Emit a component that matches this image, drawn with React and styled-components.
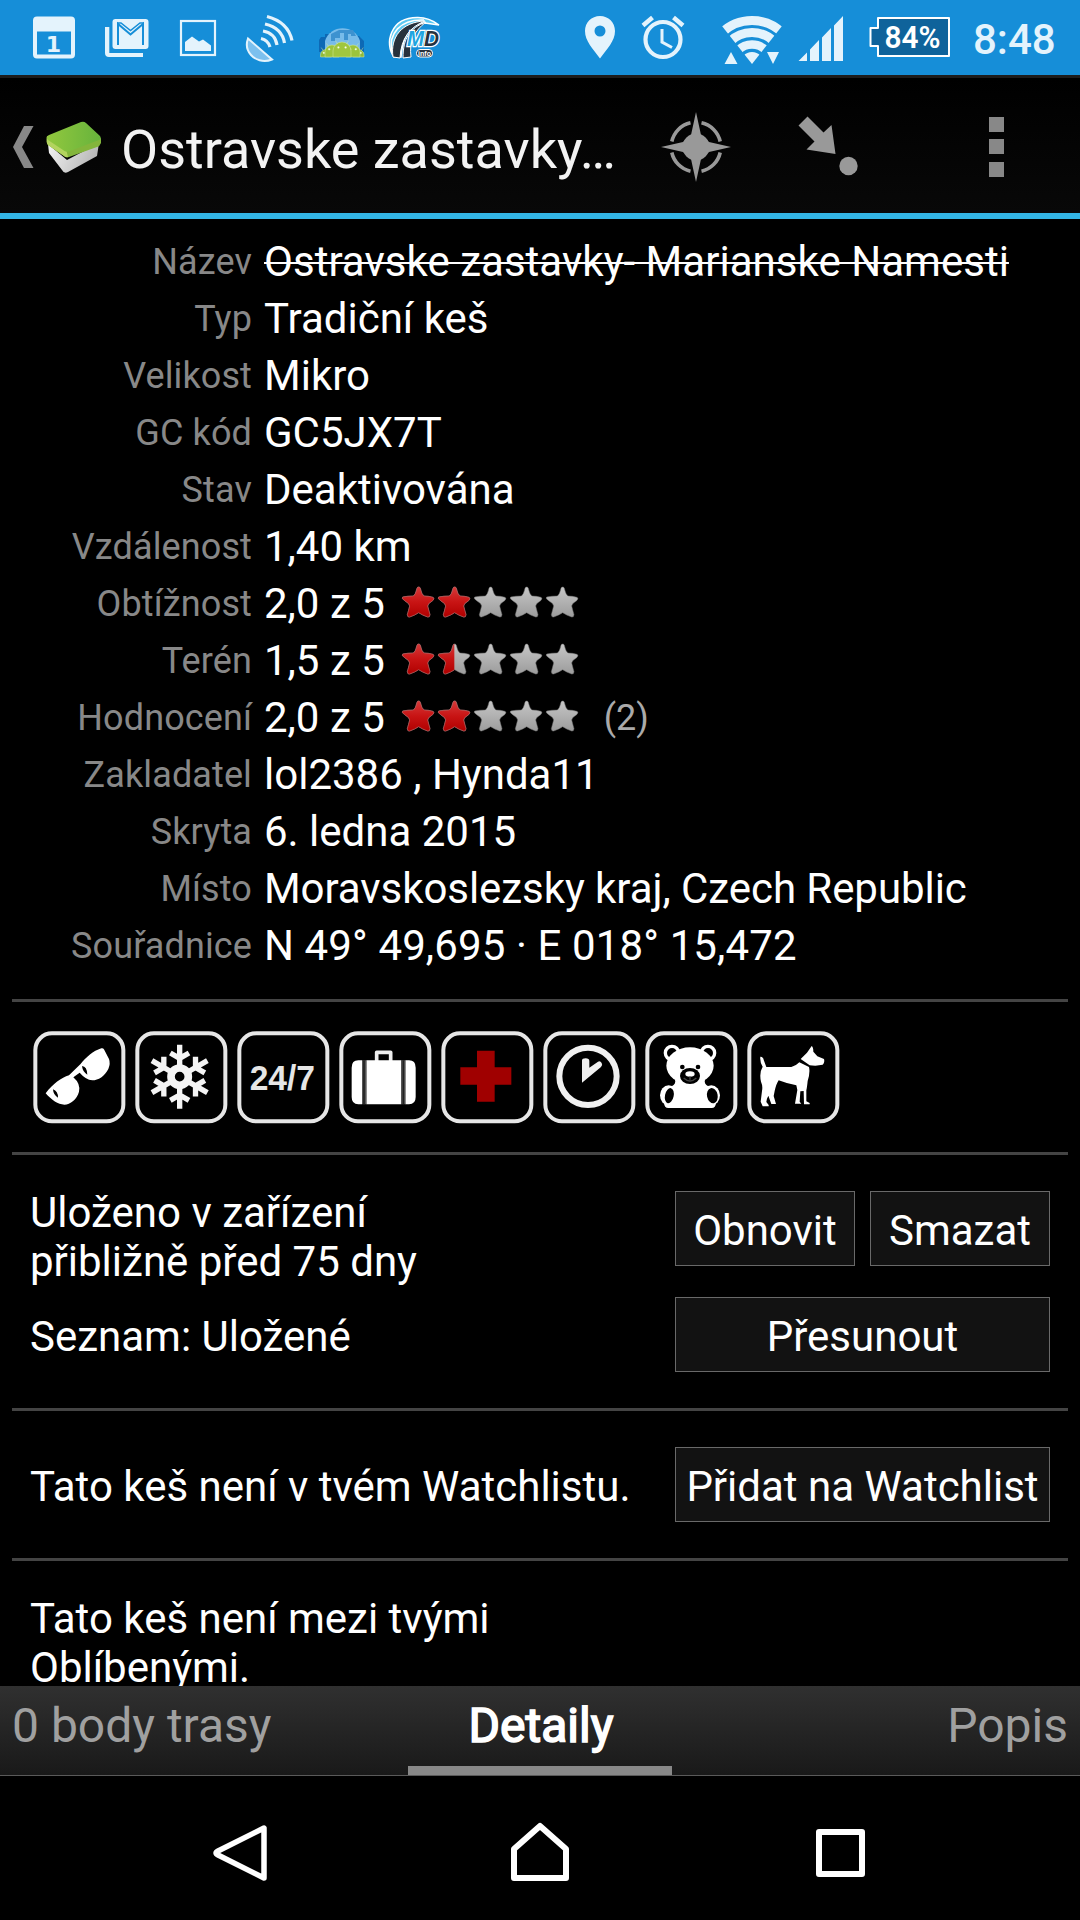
import styled, { createGlobalStyle } from 'styled-components';

const GlobalStyle = createGlobalStyle`
  * {
    box-sizing: border-box;
  }

  body {
    margin: 0;
    background: #000000;
    color: #ffffff;
    font-family: Roboto, "Liberation Sans", sans-serif;
    font-size: 42px;
    line-height: 49px;
  }

  svg {
    display: block;
    flex: none;
  }
`;

const Screen = styled.div`
  width: 1080px;
  height: 1920px;
  display: flex;
  flex-direction: column;
  overflow: hidden;
  background: #000000;
`;

const StatusBar = styled.div`
  height: 78px;
  flex: none;
  display: flex;
  justify-content: space-between;
  padding-left: 18px;
  background: #168ed8;
  border-bottom: 3px solid #1c1c1c;
`;

const StatusGroup = styled.div`
  display: flex;
  align-items: center;
`;

const Clock = styled.div`
  width: 108px;
  padding: 0 0 0 1px;
  margin-top: 3px;
  font-size: 42px;
  font-weight: 500;
  color: #e4f3fc;
`;

const ActionBar = styled.header`
  height: 141px;
  flex: none;
  display: flex;
  align-items: center;
  padding: 3px 29px 0 0;
  background: linear-gradient(#000000, #080808);
  border-bottom: 6px solid #33b5e5;
`;

const Title = styled.h1`
  width: 517px;
  margin: 5px 0 0 15px;
  font-size: 54px;
  line-height: 64px;
  font-weight: 400;
  color: #f3f3f3;
  white-space: nowrap;
`;

const MenuButton = styled.div`
  margin-left: auto;
`;

const Content = styled.main`
  height: 1467px;
  flex: none;
  padding: 14px 12px 0;
  overflow: hidden;
`;

const Details = styled.dl`
  margin: 0;
  height: 766px;
`;

const DetailRow = styled.div`
  height: 57px;
  display: flex;
  align-items: center;
`;

const Label = styled.dt`
  width: 240px;
  font-size: 36px;
  line-height: 42px;
  letter-spacing: 0.12px;
  text-align: right;
  color: #888888;
`;

const Value = styled.dd`
  margin: 0 0 0 12px;
  display: flex;
  align-items: center;
  white-space: nowrap;
  letter-spacing: ${({ $tracking = 0 }) => $tracking}px;
  text-decoration: ${({ $struck }) => ($struck ? 'line-through' : 'none')};
  text-decoration-thickness: 2px;
`;

const StarRow = styled.div`
  display: flex;
  margin: 0 0 4px 16px;
`;

const Votes = styled.span`
  margin-left: 23px;
  font-size: 36px;
  line-height: 42px;
  color: #aaaaaa;
`;

const Attributes = styled.div`
  height: 153px;
  display: flex;
  gap: 9px;
  padding: 29px 0 0 21px;
  border-top: 3px solid #444444;
`;

const Section = styled.section`
  height: ${({ $height }) => $height}px;
  display: grid;
  grid-template-columns: 1fr 375px;
  align-content: start;
  row-gap: 31px;
  padding: 36px 18px 0;
  border-top: 3px solid #444444;
`;

const Note = styled.p`
  margin: 0;
  height: 75px;
  padding-top: ${({ $lines }) => ($lines === 2 ? 16 : 4)}px;
  display: flex;
  align-items: center;
  white-space: pre;
`;

const Actions = styled.div`
  display: flex;
  gap: 15px;
`;

const Button = styled.button`
  flex: 1;
  height: 75px;
  padding: 4px 0 0;
  border: 1px solid #696969;
  background: #121212;
  color: #ffffff;
  font: inherit;
  white-space: nowrap;
`;

const Tabs = styled.nav`
  height: 90px;
  flex: none;
  display: grid;
  grid-template-columns: 396px 288px 396px;
  background: linear-gradient(#303030, #191919);
  border-bottom: 1px solid #5a5a5a;
`;

const Tab = styled.a`
  padding: 12px 12px 0;
  font-size: 48px;
  line-height: 56px;
  text-align: ${({ $align }) => $align};
  text-indent: ${({ $active }) => ($active ? 2 : 0)}px;
  color: ${({ $active }) => ($active ? '#ffffff' : '#a0a0a0')};
  -webkit-text-stroke: ${({ $active }) => ($active ? '1.6px #ffffff' : '0')};
`;

const Indicator = styled.div`
  height: 9px;
  margin-top: 12px;
  background: #888888;
`;

const NavBar = styled.div`
  height: 144px;
  flex: none;
  display: flex;
  justify-content: center;
  gap: 220px;
  padding-top: 46px;
`;

const STAR =
  'M53 9 Q57 9 58 13 Q62 32 69 36 Q82 36 96 40 Q102 44 95 50 Q80 59 80 66 Q83 78 87 92 Q86 101 80 99 Q65 94 53 86 Q41 94 26 99 Q20 101 19 92 Q23 78 26 66 Q26 59 11 50 Q0 43 5 39 Q20 36 37 36 Q44 32 48 13 Q49 9 53 9 Z';

const Star = ({ fill }) => (
  <svg width="36" height="36" viewBox="0 0 108 108">
    <defs>
      <linearGradient id="red" x1="0" y1="0" x2="0" y2="1">
        <stop offset="0" stopColor="#d63a3a" />
        <stop offset="0.5" stopColor="#c81414" />
        <stop offset="1" stopColor="#b00000" />
      </linearGradient>
      <linearGradient id="grey" x1="0" y1="0" x2="0" y2="1">
        <stop offset="0" stopColor="#c6c6c6" />
        <stop offset="1" stopColor="#9c9c9c" />
      </linearGradient>
      <clipPath id="half">
        <rect width="52" height="108" />
      </clipPath>
    </defs>
    <path d={STAR} fill="url(#grey)" stroke="#777777" strokeWidth="1.5" />
    {fill > 0 && (
      <path
        d={STAR}
        fill="url(#red)"
        stroke="#b05a5a"
        strokeWidth="2"
        clipPath={fill < 1 ? 'url(#half)' : undefined}
      />
    )}
  </svg>
);

const Stars = ({ value }) => (
  <StarRow>
    {[0, 1, 2, 3, 4].map((i) => (
      <Star key={i} fill={Math.min(1, Math.max(0, value - i))} />
    ))}
  </StarRow>
);

const CalendarIcon = () => (
  <svg width="72" height="75" viewBox="18 0 72 75">
    <path
      fill="#e4f3fc"
      fillRule="evenodd"
      d="M37 16.5h34a4 4 0 0 1 4 4v34a4 4 0 0 1-4 4H37a4 4 0 0 1-4-4v-34a4 4 0 0 1 4-4ZM37 31.500v23h34v-23Z"
    />
    <text x="53.500" y="51.500" fontSize="22" fontWeight="700" textAnchor="middle" fill="#e4f3fc" fontFamily="DejaVu Sans">1</text>
  </svg>
);

const MailIcon = () => (
  <svg width="72" height="75" viewBox="90 0 72 75">
    <path fill="#e4f3fc" d="M105 27h4.300v26H143v4h-34a4 4 0 0 1-4-4Z" />
    <rect x="112.500" y="19" width="36" height="30" rx="3" fill="#e4f3fc" />
    <path fill="none" stroke="#168ed8" strokeWidth="2" d="M118 45V24l12.500 10.500L143 24v21" />
    <path fill="none" stroke="#168ed8" strokeWidth="1.500" d="M117 23h4l9.500 7.500 9.500-7.500h4" />
  </svg>
);

const PictureIcon = () => (
  <svg width="72" height="75" viewBox="162 0 72 75">
    <rect x="181" y="21" width="34" height="34" fill="none" stroke="#e4f3fc" strokeWidth="2.200" />
    <path fill="#e4f3fc" d="M185 51v-9l7-5.500 7 5 4-2 8 6V51Z" />
  </svg>
);

const SatelliteIcon = () => (
  <svg width="72" height="75" viewBox="234 0 72 75">
    <path d="M248 38.500 272 59.500C263 63 255 59.500 251 55 246.500 50 246 44 248 38.500Z" fill="#7cc0ee" stroke="#e4f3fc" strokeWidth="2" />
    <g fill="none" stroke="#e4f3fc" strokeWidth="3.200">
      <path d="M261 38.500Q268 40 270 47" />
      <path d="M263 31Q275 33 277 45" />
      <path d="M265 24Q282 28 284.500 43" />
      <path d="M267 16.500Q288 22 292 40.500" />
    </g>
  </svg>
);

const Android = ({ x, y, size, color }) => (
  <g fill={color} stroke="#d7eaa0" strokeWidth="0.5">
    <path d={`M${x - size} ${y}a${size} ${size} 0 0 1 ${size * 2} 0V57h${-size * 2}Z`} />
    <path d={`M${x - size * 0.5} ${y - size * 0.8}l-2-3M${x + size * 0.5} ${y - size * 0.8}l2-3`} />
    <circle cx={x - size * 0.4} cy={y - size * 0.4} r="0.9" fill="#ffffff" />
    <circle cx={x + size * 0.4} cy={y - size * 0.4} r="0.9" fill="#ffffff" />
  </g>
);

const AndroidCrowdIcon = () => (
  <svg width="72" height="75" viewBox="306 0 72 75">
    <path d="M319 52V40l2-3h4v-3h5v-2h24v4h5l5 5v11Z" fill="#0d69b5" />
    <path d="M325 50V41c5-17 30-17 35 0v9Z" fill="#77bbea" />
    <path d="M331 34l8-4h14l3 6h-5v-2h-3v6h-4v-7h-4v5h-5v3h-4Z" fill="#3d92d0" />
    <Android x={326} y={55} size={5.5} color="#8fb93a" />
    <Android x={358.5} y={55} size={5.5} color="#8fb93a" />
    <Android x={332} y={52} size={7} color="#9cc43c" />
    <Android x={353} y={52} size={7} color="#9cc43c" />
    <Android x={342} y={51} size={9} color="#a0c63e" />
  </svg>
);

const RoadIcon = () => (
  <svg width="72" height="75" viewBox="378 0 72 75">
    <path d="M394 57C384 44 390 17 418 17.500c9 0 15 3 21 7.500l-14-2c-13 0-22 10-24 34Z" fill="#5cc8f2" stroke="#ffffff" strokeWidth="1.500" />
    <path d="M392 52C388 34 400 19 424 20" fill="none" stroke="#ffffff" strokeWidth="1.500" />
    <path d="M393 57C390 37 402 22 425 21c-15 6-24 17-25 37Z" fill="#27313d" stroke="#ffffff" strokeWidth="1" />
    <path d="M403 58c0-20 7-30 23-36-12 9-17 20-15 35Z" fill="#27313d" stroke="#ffffff" strokeWidth="1" />
    <g fontFamily="Liberation Sans" fontWeight="700" fontStyle="italic" fontSize="22" stroke="#ffffff" strokeWidth="2.400" paintOrder="stroke">
      <text x="407" y="46" fill="#20a5e0" textLength="17" lengthAdjust="spacingAndGlyphs">M</text>
      <text x="424" y="46" fill="#27313d" textLength="15" lengthAdjust="spacingAndGlyphs">D</text>
    </g>
    <rect x="416.500" y="49.500" width="16" height="7.500" rx="3.500" fill="#27313d" stroke="#ffffff" strokeWidth="1" />
    <text x="424.500" y="55.700" fontFamily="Liberation Sans" fontWeight="700" fontSize="7" fill="#ffffff" textAnchor="middle">info</text>
  </svg>
);

const PinIcon = () => (
  <svg width="63" height="75" viewBox="569 0 63 75">
    <path fill="#e4f3fc" fillRule="evenodd" d="M600 16c8.500 0 15 6.500 15 15 0 10-8 18-15 27.500C593 49 585 41 585 31c0-8.500 6.500-15 15-15Zm0 9.500a5.500 5.500 0 1 0 0 11 5.500 5.500 0 0 0 0-11Z" />
  </svg>
);

const AlarmIcon = () => (
  <svg width="80" height="75" viewBox="632 0 80 75">
    <g fill="none" stroke="#e4f3fc">
      <circle cx="663" cy="39.500" r="17.500" strokeWidth="4.200" />
      <path strokeWidth="3" d="M662 29v13l10 5.500" />
      <path strokeWidth="4.500" d="M643 25.500 652.500 17.500M683 25.500 673.500 17.500" />
    </g>
  </svg>
);

const WifiIcon = () => (
  <svg width="78" height="75" viewBox="712 0 78 75">
    <defs>
      <clipPath id="fan">
        <path d="M752 64 718 21V0h68v21Z" />
      </clipPath>
    </defs>
    <g clipPath="url(#fan)" fill="none" stroke="#e4f3fc">
      <circle cx="752" cy="64" r="43.500" strokeWidth="9" />
      <circle cx="752" cy="64" r="31.500" strokeWidth="9" />
      <circle cx="752" cy="64" r="19.500" strokeWidth="8.500" />
      <circle cx="752" cy="64" r="6" strokeWidth="12" />
    </g>
    <path fill="#e4f3fc" d="M724.500 64h13L731 52ZM767 52h12l-6 12Z" />
  </svg>
);

const SignalIcon = () => (
  <svg width="71" height="75" viewBox="790 0 71 75">
    <path fill="#e4f3fc" d="M798.500 61 807 52.500V61ZM810 61V49.500L819 40V61ZM822 61V37.500L831 28V61ZM834 61V25.500L843 16V61Z" />
  </svg>
);

const BatteryIcon = () => (
  <svg width="111" height="75" viewBox="861 0 111 75">
    <path d="M878 18h71v38h-71v-10h-7.500V28h7.500Z" fill="#0f639b" stroke="#ffffff" strokeWidth="2" strokeLinejoin="round" />
    <text x="912.500" y="48" fontSize="31" fontWeight="600" fill="#ffffff" textAnchor="middle" textLength="56" lengthAdjust="spacingAndGlyphs">84%</text>
  </svg>
);

const BackChevron = () => (
  <svg width="34" height="60" viewBox="0 0 34 60">
    <path fill="#888888" d="M24 9h9.500L22 30l11.500 21H24L13 30Z" />
  </svg>
);

const BrickLogo = () => (
  <svg width="72" height="72" viewBox="0 0 72 72">
    <defs>
      <linearGradient id="sponge" x1="0" y1="0" x2="1" y2="0">
        <stop offset="0" stopColor="#92c83e" />
        <stop offset="1" stopColor="#67b33c" />
      </linearGradient>
      <linearGradient id="base" x1="0" y1="0" x2="1" y2="0.3">
        <stop offset="0" stopColor="#f4f4f4" />
        <stop offset="1" stopColor="#b8b8b8" />
      </linearGradient>
    </defs>
    <path d="M14 33 33 49 65 32 63 45 34 61Q30 63 28 59L15 42Z" fill="url(#base)" />
    <path d="M13 25 31 38 67 27V32Q66 35 63 36L35 46Q32 47 30 45L14 34Q12 32 13 25Z" fill="#83b53b" />
    <path d="M13 25 32 38 34 46Q32 47 30 45L14 34Q12 32 13 25Z" fill="#b3d45e" />
    <path d="M15 24 47 11Q50 10 52 12L66 25Q68 28 65 29L36 40Q32 42 29 39L14 29Q11 26 15 24Z" fill="url(#sponge)" />
  </svg>
);

const CompassIcon = () => (
  <svg width="124" height="72" viewBox="-58 -36 124 72">
    <path
      fill="none"
      stroke="#999999"
      strokeWidth="3.600"
      d="M5.500-24.200A24.500 24.500 0 0 1 24.200-5.500M24.200 5.500A24.500 24.500 0 0 1 5.500 24.200M-5.500 24.200A24.500 24.500 0 0 1-24.200 5.500M-24.200-5.500A24.500 24.500 0 0 1-5.500-24.200"
    />
    <circle r="13.500" fill="#999999" />
    <path fill="#999999" d="M0-35 5-12 13-5 35 0 13 5 5 12 0 35-5 12-13 5-35 0-13-5-5-12Z" />
  </svg>
);

const NavigateIcon = () => (
  <svg width="120" height="72" viewBox="0 0 120 72">
    <path fill="#999999" d="M36.500 14.500 45.500 5.500 61.500 21.500 69.500 14 73.500 43 44.500 38.500 52.500 30.500Z" />
    <circle cx="86.500" cy="55" r="9.200" fill="#999999" />
  </svg>
);

const OverflowIcon = () => (
  <svg width="80" height="72" viewBox="0 0 80 72">
    <path fill="#888888" d="M18 6h15v15H18ZM18 28h15v15H18ZM18 51h15v15H18Z" />
  </svg>
);

const Attribute = ({ children }) => (
  <svg width="93" height="93" viewBox="0 0 279 279">
    <rect x="7" y="7" width="264" height="264" rx="50" fill="none" stroke="#e6e6e6" strokeWidth="12" />
    {children}
  </svg>
);

const Sunglasses = () => (
  <Attribute>
    <path
      fill="#ffffff"
      d="M38 187C60 158 85 140 108 133L142 100C160 78 180 60 205 52Q212 50 214 57L228 84Q233 98 226 114C215 136 196 148 178 148Q158 146 140 125L121 139Q143 158 138 182C132 205 112 220 94 221C75 221 56 207 38 187Z"
    />
    <path fill="#000000" d="M147 105Q162 106 163 131Q149 123 147 105ZM60 175Q75 180 75 200Q61 192 60 175Z" />
  </Attribute>
);

const Snowflake = () => (
  <Attribute>
    <g transform="translate(134 137)" fill="none" stroke="#f4f4f4" strokeWidth="16">
      {[0, 60, 120, 180, 240, 300].map((angle) => (
        <path key={angle} transform={`rotate(${angle})`} d="M0-28V-96M-28-71 0-55 28-71" />
      ))}
      <circle r="26" strokeWidth="23" />
    </g>
  </Attribute>
);

const AllDay = () => (
  <Attribute>
    <text x="136" y="177" fontFamily="Liberation Sans" fontWeight="700" fontSize="104" fill="#e6e6e6" textAnchor="middle" textLength="196" lengthAdjust="spacingAndGlyphs">
      24/7
    </text>
  </Attribute>
);

const Suitcase = () => (
  <Attribute>
    <path d="M113 90V64H155V90" fill="none" stroke="#eeeeee" strokeWidth="11" strokeLinejoin="round" />
    <path fill="#ffffff" d="M69 88V220H58Q38 220 38 198V110Q38 88 58 88ZM82 88H187V220H82ZM199 88H210Q230 88 230 110V198Q230 220 210 220H199Z" />
    <path fill="#555555" d="M69 88h13v132H69ZM187 88h12v132h-12Z" />
    <path stroke="#222222" strokeWidth="5" d="M75 88v132M193 88v132" />
  </Attribute>
);

const RedCross = () => (
  <Attribute>
    <path fill="#a00000" d="M108 59h53v50h50v52h-50v51h-53v-51H58v-52h50Z" />
  </Attribute>
);

const ClockFace = () => (
  <Attribute>
    <circle cx="135" cy="136" r="86" fill="none" stroke="#f0f0f0" strokeWidth="18" />
    <path fill="#f0f0f0" d="M117 155V88Q117 82 128 82Q139 82 139 90V110L165 92Q172 89 176 96Q180 103 174 108Z" />
  </Attribute>
);

const Teddy = () => (
  <Attribute>
    <circle cx="81" cy="66" r="20" fill="none" stroke="#ffffff" strokeWidth="10" />
    <circle cx="189" cy="66" r="20" fill="none" stroke="#ffffff" strokeWidth="10" />
    <ellipse cx="135" cy="104" rx="71" ry="55" fill="#ffffff" />
    <path fill="#ffffff" d="M90 146H180Q176 158 190 166L213 215Q212 231 200 231H70Q58 231 57 215L80 166Q94 158 90 146Z" />
    <ellipse cx="71" cy="193" rx="26" ry="30" fill="#ffffff" />
    <ellipse cx="199" cy="193" rx="26" ry="30" fill="#ffffff" />
    <ellipse cx="73" cy="194" rx="13" ry="23" transform="rotate(12 73 194)" fill="#000000" />
    <ellipse cx="202" cy="194" rx="16" ry="23" transform="rotate(-12 202 194)" fill="#000000" />
    <circle cx="112" cy="108" r="7" fill="#000000" />
    <circle cx="159" cy="108" r="7" fill="#000000" />
    <ellipse cx="135" cy="135" rx="30" ry="24" fill="#000000" />
    <ellipse cx="135" cy="129" rx="14" ry="8" fill="#ffffff" />
    <path d="M135 136V146M116 141Q135 159 154 141" fill="none" stroke="#444444" strokeWidth="4" />
  </Attribute>
);

const Dog = () => (
  <Attribute>
    <path
      fill="#ffffff"
      d="M40 77Q48 76 51 89L58 108H133Q148 104 157 94L186 108Q190 125 182 150Q180 170 178 178V211L188 216V220H171L170 180 160 181 158 212 163 218H144L151 177 148 163Q120 158 95 148Q88 158 83 180L80 195 87 219H73L64 194Q58 205 58 213L65 222V226H47L41 212 45 180Q48 165 42 152Q36 125 47 107Q38 92 40 77Z"
    />
    <path fill="#ffffff" d="M161 84 180 65 194 45Q199 48 199 62L211 76 231 84Q234 94 227 101L205 104Q195 104 188 103Z" />
  </Attribute>
);

const BackKey = () => (
  <svg width="80" height="64" viewBox="0 0 80 64">
    <path d="M64 6V56L18 33Q14 31 18 29Z" fill="none" stroke="#ffffff" strokeWidth="5.500" strokeLinejoin="round" />
  </svg>
);

const HomeKey = () => (
  <svg width="80" height="64" viewBox="0 0 80 64">
    <path d="M14 27 40 4 66 27V56H14Z" fill="none" stroke="#ffffff" strokeWidth="6" strokeLinejoin="round" />
  </svg>
);

const RecentKey = () => (
  <svg width="80" height="64" viewBox="0 0 80 64">
    <rect x="19" y="10" width="43" height="42" fill="none" stroke="#ffffff" strokeWidth="6" strokeLinejoin="round" />
  </svg>
);

const details = [
  { label: 'Název', value: 'Ostravske zastavky- Marianske Namesti', tracking: 0.03, struck: true },
  { label: 'Typ', value: 'Tradiční keš' },
  { label: 'Velikost', value: 'Mikro' },
  { label: 'GC kód', value: 'GC5JX7T' },
  { label: 'Stav', value: 'Deaktivována' },
  { label: 'Vzdálenost', value: '1,40 km' },
  { label: 'Obtížnost', value: '2,0 z 5', stars: 2 },
  { label: 'Terén', value: '1,5 z 5', stars: 1.5 },
  { label: 'Hodnocení', value: '2,0 z 5', stars: 2, votes: '(2)' },
  { label: 'Zakladatel', value: 'lol2386 , Hynda11' },
  { label: 'Skryta', value: '6. ledna 2015' },
  { label: 'Místo', value: 'Moravskoslezsky kraj, Czech Republic', tracking: -0.06 },
  { label: 'Souřadnice', value: 'N 49° 49,695 · E 018° 15,472', tracking: 0.12 },
];

const App = () => (
  <Screen>
    <GlobalStyle />
    <StatusBar>
      <StatusGroup>
        <CalendarIcon />
        <MailIcon />
        <PictureIcon />
        <SatelliteIcon />
        <AndroidCrowdIcon />
        <RoadIcon />
      </StatusGroup>
      <StatusGroup>
        <PinIcon />
        <AlarmIcon />
        <WifiIcon />
        <SignalIcon />
        <BatteryIcon />
        <Clock>8:48</Clock>
      </StatusGroup>
    </StatusBar>

    <ActionBar>
      <BackChevron />
      <BrickLogo />
      <Title>Ostravske zastavky…</Title>
      <CompassIcon />
      <NavigateIcon />
      <MenuButton>
        <OverflowIcon />
      </MenuButton>
    </ActionBar>

    <Content>
      <Details>
        {details.map(({ label, value, tracking, struck, stars, votes }) => (
          <DetailRow key={label}>
            <Label>{label}</Label>
            <Value $struck={struck} $tracking={tracking}>
              {value}
              {stars && <Stars value={stars} />}
              {votes && <Votes>{votes}</Votes>}
            </Value>
          </DetailRow>
        ))}
      </Details>

      <Attributes>
        <Sunglasses />
        <Snowflake />
        <AllDay />
        <Suitcase />
        <RedCross />
        <ClockFace />
        <Teddy />
        <Dog />
      </Attributes>

      <Section $height={256}>
        <Note $lines={2}>{'Uloženo v zařízení\npřibližně před 75 dny'}</Note>
        <Actions>
          <Button>Obnovit</Button>
          <Button>Smazat</Button>
        </Actions>
        <Note>Seznam: Uložené</Note>
        <Actions>
          <Button>Přesunout</Button>
        </Actions>
      </Section>

      <Section $height={150}>
        <Note>Tato keš není v tvém Watchlistu.</Note>
        <Actions>
          <Button>Přidat na Watchlist</Button>
        </Actions>
      </Section>

      <Section $height={150}>
        <Note $lines={2}>{'Tato keš není mezi tvými\nOblíbenými.'}</Note>
      </Section>
    </Content>

    <Tabs>
      <Tab $align="left">0 body trasy</Tab>
      <Tab $align="center" $active>
        Detaily
        <Indicator />
      </Tab>
      <Tab $align="right">Popis</Tab>
    </Tabs>

    <NavBar>
      <BackKey />
      <HomeKey />
      <RecentKey />
    </NavBar>
  </Screen>
);

export default App;
